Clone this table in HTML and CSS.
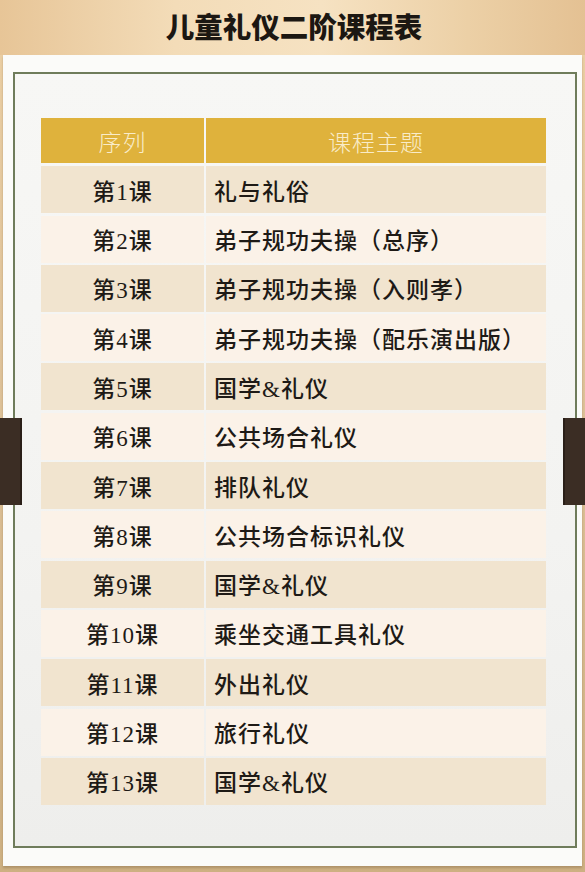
FILE: index.html
```html
<!DOCTYPE html>
<html lang="zh">
<head>
<meta charset="utf-8">
<title>儿童礼仪二阶课程表</title>
<link rel="stylesheet" href="styles.css">
</head>
<body>
<div class="page">
  <header class="top">
    <h1 class="title">儿童礼仪二阶课程表</h1>
  </header>
  <main class="panel">
    <div class="frame">
      <div class="table">
        <div class="cell head c1">序列</div>
        <div class="cell head c2">课程主题</div>

        <div class="cell odd c1">第1课</div><div class="cell odd c2">礼与礼俗</div>
        <div class="cell even c1">第2课</div><div class="cell even c2">弟子规功夫操（总序）</div>
        <div class="cell odd c1">第3课</div><div class="cell odd c2">弟子规功夫操（入则孝）</div>
        <div class="cell even c1">第4课</div><div class="cell even c2">弟子规功夫操（配乐演出版）</div>
        <div class="cell odd c1">第5课</div><div class="cell odd c2">国学&amp;礼仪</div>
        <div class="cell even c1">第6课</div><div class="cell even c2">公共场合礼仪</div>
        <div class="cell odd c1">第7课</div><div class="cell odd c2">排队礼仪</div>
        <div class="cell even c1">第8课</div><div class="cell even c2">公共场合标识礼仪</div>
        <div class="cell odd c1">第9课</div><div class="cell odd c2">国学&amp;礼仪</div>
        <div class="cell even c1">第10课</div><div class="cell even c2">乘坐交通工具礼仪</div>
        <div class="cell odd c1">第11课</div><div class="cell odd c2">外出礼仪</div>
        <div class="cell even c1">第12课</div><div class="cell even c2">旅行礼仪</div>
        <div class="cell odd c1">第13课</div><div class="cell odd c2">国学&amp;礼仪</div>
      </div>
    </div>
  </main>
  <div class="tab tab-left"></div>
  <div class="tab tab-right"></div>
</div>
</body>
</html>
```

FILE: styles.css
```css
html, body {
  margin: 0;
  padding: 0;
}
body {
  width: 585px;
  height: 872px;
  overflow: hidden;
  background: linear-gradient(180deg, #eed3a9 0%, #e9cda2 8%, #dcc097 50%, #cdb082 100%);
}
.page {
  position: relative;
  width: 585px;
  height: 872px;
  display: flex;
  flex-direction: column;
}
.top {
  height: 55px;
  display: flex;
  align-items: center;
  justify-content: center;
  background: linear-gradient(90deg, #e7c597 0%, #f3dcb8 30%, #f6e2c2 55%, #ecd0a6 80%, #e4c193 100%);
}
.title {
  margin: 0 0 2px 0;
  padding-left: 3px;
  font-family: "Noto Sans CJK SC", "Noto Sans", sans-serif;
  font-weight: 900;
  font-size: 28.5px;
  line-height: 1;
  color: #1c1712;
}
.panel {
  margin: 0 3px 0 3px;
  height: 811px;
  background: #fbfbf9;
  display: flex;
  flex-direction: column;
  padding: 17px 5px 18px 10px;
  box-sizing: border-box;
  box-shadow: 0 2px 2px rgba(120, 95, 60, 0.35);
}
.frame {
  flex: 1;
  border: 2px solid #6f7c5b;
  background: linear-gradient(180deg, #f7f7f5 0%, #f3f3f1 60%, #eeeeec 100%);
  padding: 44px 29px 0 26px;
}
.table {
  display: grid;
  grid-template-columns: 163px 1fr;
  grid-template-rows: 46px repeat(13, 47px);
  column-gap: 2px;
  row-gap: 2.3px;
}
.cell {
  display: flex;
  align-items: center;
  font-family: "Liberation Serif", "Noto Sans CJK SC", serif;
  font-size: 23px;
  font-weight: 500;
  letter-spacing: 1px;
  color: #1e1a16;
}
.cell.c1 {
  justify-content: center;
}
.cell.c2 {
  padding-left: 8px;
}
.head {
  background: #dfb23c;
  color: #f9ecc9;
  font-family: "Noto Sans CJK SC", serif;
  font-weight: 300;
  font-size: 23px;
  margin-bottom: 1px;
}
.head.c2 {
  justify-content: center;
  padding-left: 0;
}
.odd {
  background: #f1e4cf;
}
.even {
  background: #fbf2e8;
}
.tab {
  position: absolute;
  top: 418px;
  width: 20px;
  height: 87px;
  background: #3b2d24;
}
.tab-left {
  left: 0;
  border-right: 2px solid #2a1f18;
}
.tab-right {
  right: 0;
  border-left: 2px solid #2a1f18;
}
```
